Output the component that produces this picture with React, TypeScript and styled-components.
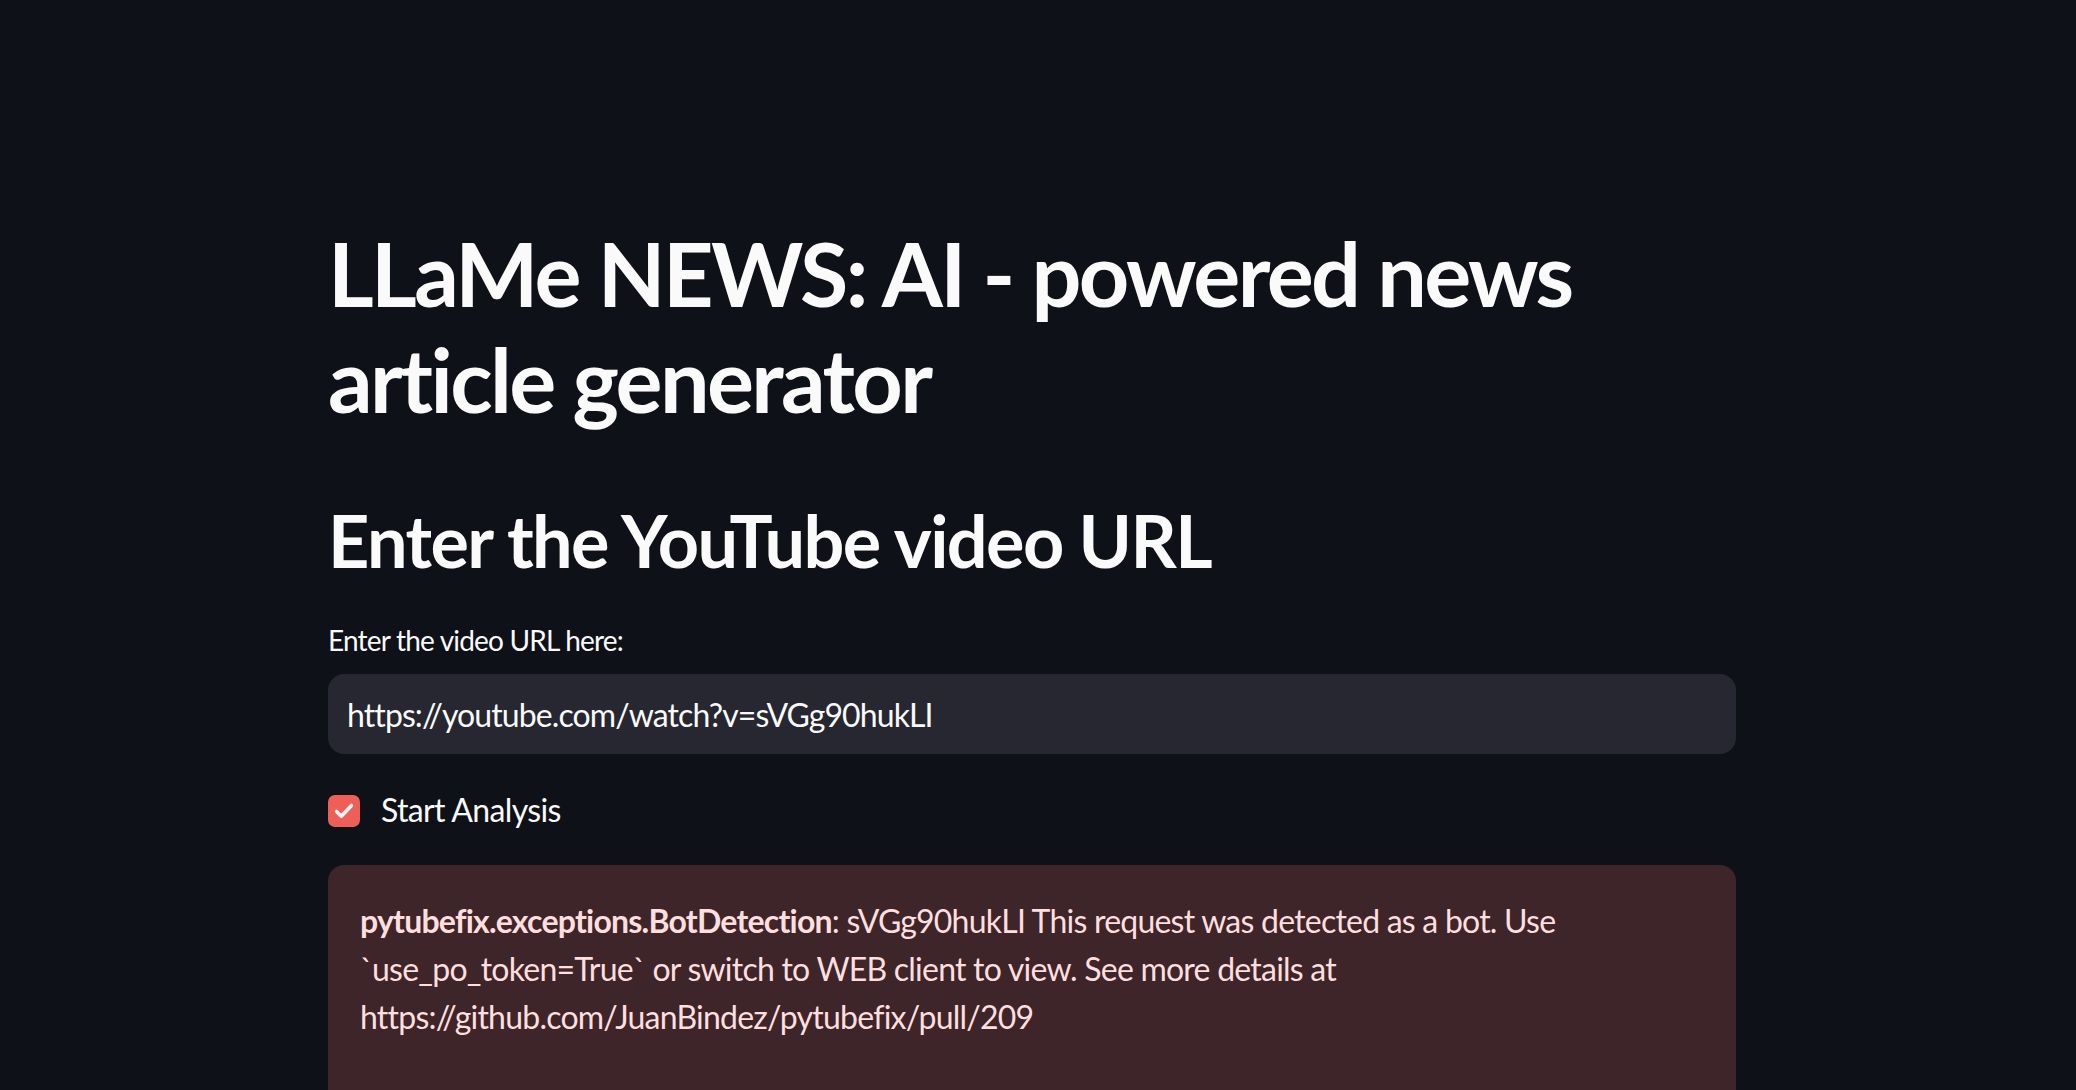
import React from "react";
import styled, { createGlobalStyle } from "styled-components";

const Global = createGlobalStyle`
  html, body { margin: 0; padding: 0; background: #0e1117; }
  body { font-family: "Lato", "Noto Sans", sans-serif; color: #fafafa; }
  * { box-sizing: border-box; }
`;

const Page = styled.main`
  min-height: 1090px;
  background: #0e1117;
  overflow: hidden;
  padding-left: 328px;
`;

const Block = styled.div`
  width: 1408px;
  padding-top: 221px;
  display: flex;
  flex-direction: column;
`;

const Title = styled.h1`
  margin: 0;
  font-size: 88px;
  font-weight: 700;
  line-height: 1.2;
  letter-spacing: -2.6px;
  color: #fafafa;
`;

const Header = styled.h2`
  margin: 65px 0 0;
  font-size: 72px;
  font-weight: 700;
  line-height: 1.2;
  letter-spacing: -1.6px;
  color: #fafafa;
`;

const Label = styled.label`
  margin-top: 34px;
  font-size: 28px;
  line-height: 1.6;
  letter-spacing: -0.8px;
  color: #fafafa;
`;

const InputBox = styled.div`
  margin-top: 12px;
  height: 80px;
  border-radius: 16px;
  background: #262730;
  display: flex;
  align-items: center;
  padding: 0 19px;
`;

const Input = styled.input`
  flex: 1;
  border: none;
  outline: none;
  background: transparent;
  color: #fafafa;
  font-family: "Lato", "Noto Sans", sans-serif;
  font-size: 32px;
  letter-spacing: -0.9px;
  padding: 0;
`;

const CheckRow = styled.label`
  margin-top: 37px;
  display: flex;
  align-items: center;
  gap: 21px;
  font-size: 32px;
  line-height: 1.2;
  letter-spacing: -0.65px;
  color: #fafafa;
`;

const Box = styled.span`
  width: 32px;
  height: 32px;
  border-radius: 7px;
  background: #ef5f58;
  display: flex;
  align-items: center;
  justify-content: center;
`;

const Alert = styled.div`
  margin-top: 35px;
  min-height: 300px;
  border-radius: 16px;
  background: #3d2529;
  padding: 32px;
  color: #ffdede;
  font-size: 32px;
  line-height: 48px;
  letter-spacing: -0.77px;
`;

const Strong = styled.strong`
  font-weight: 700;
`;

export default function App() {
  return (
    <>
      <Global />
      <Page>
        <Block>
          <Title>
            LLaMe NEWS: AI - powered news
            <br />
            article generator
          </Title>
          <Header>Enter the YouTube video URL</Header>
          <Label htmlFor="url">Enter the video URL here:</Label>
          <InputBox>
            <Input id="url" defaultValue="https://youtube.com/watch?v=sVGg90hukLI" />
          </InputBox>
          <CheckRow>
            <Box>
              <svg width="24" height="24" viewBox="0 0 24 24" fill="none">
                <path d="M4.5 12.5l4.8 4.8L19.5 6.5" stroke="#f5f5f7" strokeWidth="3.6" strokeLinecap="round" strokeLinejoin="round" />
              </svg>
            </Box>
            Start Analysis
          </CheckRow>
          <Alert>
            <Strong>pytubefix.exceptions.BotDetection</Strong>: sVGg90hukLI This request was detected as a bot. Use
            <br />
            `use_po_token=True` or switch to WEB client to view. See more details at
            <br />
            https://github.com/JuanBindez/pytubefix/pull/209
          </Alert>
        </Block>
      </Page>
    </>
  );
}
